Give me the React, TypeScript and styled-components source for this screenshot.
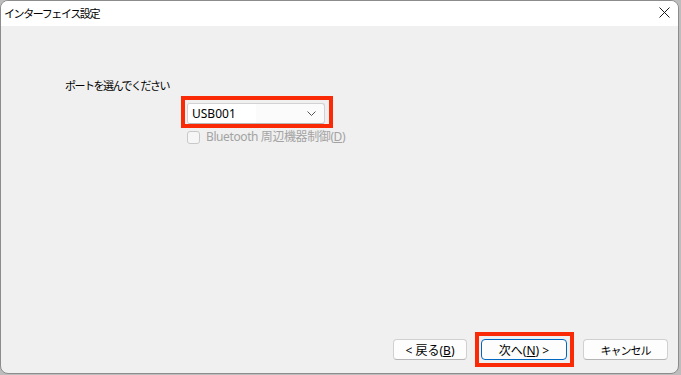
import styled, { createGlobalStyle } from "styled-components";

const GlobalStyle = createGlobalStyle`
  html, body {
    margin: 0;
    padding: 0;
    background: #bdbdbd;
  }
  body {
    font-family: "Noto Sans", "Noto Sans CJK JP", sans-serif;
    font-size: 12px;
    color: #000;
  }
`;

const SScreen = styled.div`
  width: 681px;
  height: 375px;
  background: #bdbdbd;
  overflow: hidden;
`;

const SWindow = styled.div`
  width: 677px;
  height: 372px;
  border: 1px solid #8c8c8c;
  border-radius: 8px;
  background: #f0f0f0;
  display: flex;
  flex-direction: column;
  overflow: hidden;
`;

const STitleBar = styled.div`
  height: 25px;
  flex-shrink: 0;
  background: #fff;
  display: flex;
  align-items: center;
  justify-content: space-between;
  padding: 0 8px 2px 3px;
  box-sizing: border-box;
`;

const STitle = styled.span`
  font-family: "Noto Sans CJK JP", sans-serif;
  font-size: 11px;
  line-height: 16px;
  letter-spacing: -1.4px;
`;

const SCloseButton = styled.div`
  width: 12px;
  height: 12px;
  display: flex;
  align-items: center;
  justify-content: center;
`;

const SBody = styled.div`
  flex: 1;
  display: flex;
  flex-direction: column;
  padding: 51px 0 0 64px;
`;

const SLabel = styled.div`
  font-family: "Noto Sans CJK JP", sans-serif;
  font-size: 11px;
  line-height: 16px;
  letter-spacing: -1.5px;
`;

const SFieldColumn = styled.div`
  margin: 10px 0 0 122px;
  display: flex;
  flex-direction: column;
  align-items: flex-start;
`;

const SHighlight = styled.span<{ $t: number; $r: number; $b: number; $l: number }>`
  position: relative;
  display: inline-flex;
  &::after {
    content: "";
    position: absolute;
    top: -${(p) => p.$t}px;
    right: -${(p) => p.$r}px;
    bottom: -${(p) => p.$b}px;
    left: -${(p) => p.$l}px;
    border: 4px solid #fa2a06;
    pointer-events: none;
  }
`;

const SCombo = styled.div`
  width: 136px;
  height: 19px;
  border: 1px solid #d2d2d2;
  border-bottom-color: #b8b8b8;
  border-radius: 3px;
  background: #fbfbfb;
  display: flex;
  align-items: center;
  justify-content: space-between;
  overflow: hidden;
`;

const SComboText = styled.span`
  width: 64px;
  height: 100%;
  background: #fff;
  padding-left: 4px;
  display: flex;
  align-items: center;
  font-size: 12px;
`;

const SChevron = styled.span`
  width: 10px;
  margin-right: 7px;
  display: flex;
  align-items: center;
`;

const SCheckRow = styled.div`
  margin-top: 6px;
  display: flex;
  align-items: center;
  gap: 6px;
`;

const SCheckBox = styled.span`
  width: 11px;
  height: 11px;
  border: 1px solid #c8c8c8;
  border-radius: 3px;
  background: #f6f6f6;
`;

const SCheckLabel = styled.span`
  color: #a3a3a3;
  font-size: 12px;
  line-height: 14px;
  letter-spacing: -0.4px;
`;

const SFooter = styled.div`
  display: flex;
  justify-content: flex-end;
  align-items: center;
  padding: 0 10px 13px 0;
`;

const SButton = styled.button<{ $primary?: boolean; $width: number }>`
  width: ${(p) => p.$width}px;
  height: 21px;
  margin-left: ${(p) => (p.$primary ? 14 : 16)}px;
  padding: 0;
  border-radius: 4px;
  border: 1px solid ${(p) => (p.$primary ? "#0067c0" : "#d0d0d0")};
  border-bottom-color: ${(p) => (p.$primary ? "#0067c0" : "#b5b5b5")};
  background: #fdfdfd;
  font-family: "Noto Sans", "Noto Sans CJK JP", sans-serif;
  font-size: 12px;
  color: #000;
  display: flex;
  align-items: center;
  justify-content: center;
`;

const SButtonText = styled.span<{ $tight?: boolean }>`
  font-size: ${(p) => (p.$tight ? 11 : 12)}px;
  letter-spacing: ${(p) => (p.$tight ? -1 : 0)}px;
`;

const SKey = styled.span`
  text-decoration: underline;
`;

export default function App() {
  return (
    <>
      <GlobalStyle />
      <SScreen>
        <SWindow>
          <STitleBar>
            <STitle>インターフェイス設定</STitle>
            <SCloseButton>
              <svg width="11" height="11" viewBox="0 0 11 11">
                <path d="M0.5 0.5 L10.5 10.5 M10.5 0.5 L0.5 10.5" stroke="#1a1a1a" strokeWidth="1" />
              </svg>
            </SCloseButton>
          </STitleBar>
          <SBody>
            <SLabel>ポートを選んでください</SLabel>
            <SFieldColumn>
              <SHighlight $t={7} $r={8} $b={4} $l={6}>
                <SCombo>
                  <SComboText>USB001</SComboText>
                  <SChevron>
                    <svg width="9" height="5" viewBox="0 0 9 5">
                      <path d="M0.5 0.5 L4.5 4.5 L8.5 0.5" fill="none" stroke="#555" strokeWidth="1" />
                    </svg>
                  </SChevron>
                </SCombo>
              </SHighlight>
              <SCheckRow>
                <SCheckBox />
                <SCheckLabel>
                  Bluetooth 周辺機器制御(<SKey>D</SKey>)
                </SCheckLabel>
              </SCheckRow>
            </SFieldColumn>
          </SBody>
          <SFooter>
            <SButton $width={74}>
              <SButtonText>
                &lt; 戻る(<SKey>B</SKey>)
              </SButtonText>
            </SButton>
            <SHighlight $t={7} $r={7} $b={7} $l={6} style={{ marginLeft: 14 }}>
              <SButton $primary $width={86} style={{ marginLeft: 0 }}>
                <SButtonText>
                  次へ(<SKey>N</SKey>) &gt;
                </SButtonText>
              </SButton>
            </SHighlight>
            <SButton $width={85}>
              <SButtonText $tight>キャンセル</SButtonText>
            </SButton>
          </SFooter>
        </SWindow>
      </SScreen>
    </>
  );
}
